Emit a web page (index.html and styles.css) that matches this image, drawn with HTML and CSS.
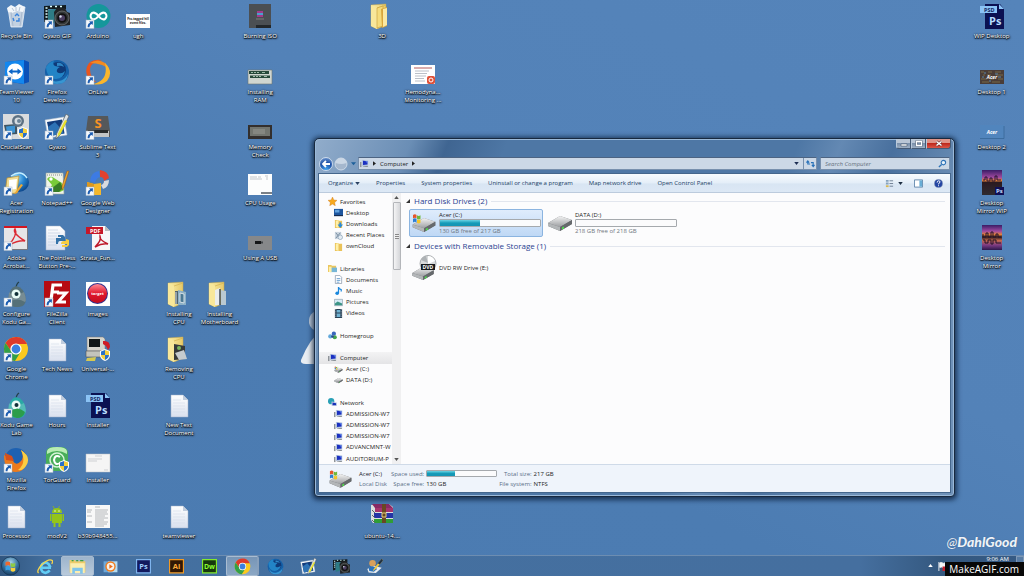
FILE: index.html
```html
<!DOCTYPE html>
<html lang="en">
<head>
<meta charset="utf-8">
<title>Desktop</title>
<link rel="stylesheet" href="styles.css">
</head>
<body>
<svg class="sprite" aria-hidden="true">
  <defs>
    <linearGradient id="g-page" x1="0" y1="0" x2="0" y2="1"><stop offset="0" stop-color="#fff"/><stop offset="1" stop-color="#d9e0ee"/></linearGradient>
    <linearGradient id="g-fold" x1="0" y1="0" x2="1" y2="0"><stop offset="0" stop-color="#fbefa9"/><stop offset="1" stop-color="#e6c867"/></linearGradient>
    <linearGradient id="g-sunset" x1="0" y1="0" x2="0" y2="1"><stop offset="0" stop-color="#3a1c66"/><stop offset=".3" stop-color="#a04aa0"/><stop offset=".42" stop-color="#e0803c"/><stop offset=".5" stop-color="#2b1a20"/><stop offset="1" stop-color="#2f2b30"/></linearGradient>
    <linearGradient id="g-mirror" x1="0" y1="0" x2="0" y2="1"><stop offset="0" stop-color="#3a1c66"/><stop offset=".25" stop-color="#a04aa0"/><stop offset=".38" stop-color="#e0803c"/><stop offset=".48" stop-color="#2b1a20"/><stop offset=".62" stop-color="#c4684a"/><stop offset=".8" stop-color="#7e3c84"/><stop offset="1" stop-color="#2c184c"/></linearGradient>
    <linearGradient id="g-disk" x1="0" y1="0" x2="0" y2="1"><stop offset="0" stop-color="#f4f4f4"/><stop offset="1" stop-color="#9c9ea1"/></linearGradient>
    <radialGradient id="g-globe" cx=".35" cy=".3" r=".8"><stop offset="0" stop-color="#9fe0ff"/><stop offset=".5" stop-color="#2684cf"/><stop offset="1" stop-color="#083a7d"/></radialGradient>
    <radialGradient id="g-orb" cx=".5" cy=".3" r=".75"><stop offset="0" stop-color="#a9d3ea"/><stop offset=".55" stop-color="#35719f"/><stop offset="1" stop-color="#143658"/></radialGradient>
    <radialGradient id="g-nav" cx=".5" cy=".9" r=".9"><stop offset="0" stop-color="#3fa2ee"/><stop offset=".55" stop-color="#1c4fa6"/><stop offset="1" stop-color="#6d95cc"/></radialGradient>
    <linearGradient id="g-red" x1="0" y1="0" x2="0" y2="1"><stop offset="0" stop-color="#ff8c96"/><stop offset=".5" stop-color="#e1162b"/><stop offset="1" stop-color="#c10d20"/></linearGradient>
  </defs>

  <symbol id="arrow" viewBox="0 0 26 26"><rect x="1" y="17" width="8" height="8.5" fill="#f6f9fc" stroke="#a3b3c4" stroke-width=".5"/><path d="M2.6 24.3c0-3 .9-4.4 2.6-4.6l-1.1-1.2 3.9-.3-.3 3.9-1.1-1.1c-1.3.3-1.9 1.4-2.1 3.3z" fill="#1c5cb0"/></symbol>
  <symbol id="page" viewBox="0 0 26 26"><path d="M5 3h12l5 5v17H5z" fill="url(#g-page)" stroke="#a3b3c8" stroke-width=".5"/><path d="M17 3v5h5z" fill="#c1cddd"/><path d="M7 8h8M7 11h12M7 14h12M7 17h12M7 20h12" stroke="#d3dcea" stroke-width=".6"/></symbol>
  <symbol id="folder" viewBox="0 0 26 26"><path d="M2 2l15-1v21l-9 4-6-3z" fill="url(#g-fold)" stroke="#c6a648" stroke-width=".5"/><path d="M2 2l6 3v21l-6-3z" fill="#f8e79a"/><path d="M8 5l9-3" fill="none" stroke="#d4b350" stroke-width=".7"/></symbol>
  <symbol id="shield" viewBox="0 0 10 12"><path d="M5 0l5 2v4q0 4-5 6Q0 10 0 6V2z" fill="#fff"/><path d="M5 1v5H1V2.500z" fill="#2a70c8"/><path d="M5 1v5h4V2.500z" fill="#f5cf3c"/><path d="M1 6h4v5Q1 9 1 6z" fill="#f5cf3c"/><path d="M9 6H5v5q4-2 4-5z" fill="#2a70c8"/></symbol>
  <symbol id="chrome" viewBox="0 0 26 26"><circle cx="13" cy="13" r="12" fill="#fbc91f"/><path d="M2.600 7A12 12 0 0 1 24 8H13a5.400 5.400 0 0 0-5 7z" fill="#de3a2c"/><path d="M2.600 7A12 12 0 0 0 12 25l5.500-9a5.400 5.400 0 0 1-9.500-1z" fill="#33a047"/><circle cx="13" cy="13" r="5.600" fill="#fff"/><circle cx="13" cy="13" r="4.400" fill="#3c7fe0"/></symbol>
  <symbol id="foxdev" viewBox="0 0 26 26"><circle cx="13" cy="13" r="12" fill="#1560a8"/><circle cx="14" cy="11" r="8" fill="#0f3a78"/><path d="M2 8q4-6 8-6-2 3 1 5l5 1q-4 2-3 5 4 3 8-1-1 7-9 8-9 0-10-12z" fill="#2384c6"/><path d="M3 16q4 8 12 6 6-1 9-7-1 10-11 10-8 0-10-9z" fill="#3796d2"/><path d="M13 4q5-1 7 4-3-2-7-1z" fill="#2f86c4"/></symbol>
  <symbol id="camera" viewBox="0 0 26 26"><path d="M0 3l22-1v4H4v12l-4 1z" fill="#111b1f"/><path d="M1.500 5h2M1.500 8h2M1.500 11h2M1.500 14h2M6 3.500h2M11 3.500h2M16 3.500h2" stroke="#dff" stroke-width="1.400"/><path d="M4 7l8-1 2 5-4 9-6 1z" fill="#2e7c85"/><path d="M10 9l3-4h8l2 4 3 1v12l-15 2z" fill="#202325"/><circle cx="18" cy="15" r="7" fill="#343839" stroke="#888" stroke-width=".6"/><circle cx="18" cy="15" r="4.800" fill="#111"/><circle cx="18" cy="15" r="3" fill="#4c3f62"/><circle cx="16.500" cy="13.500" r="1.200" fill="#d8dceb"/></symbol>
  <symbol id="gyazo" viewBox="0 0 26 26"><path d="M1 6l19-3 3 18-19 3z" fill="#f7f9fb" stroke="#b5c0cc" stroke-width=".5"/><path d="M3 8l15-2.500 2.500 14L6 22z" fill="#123c7c"/><path d="M4 13l7-5 8 9 .5 2.500L6 22z" fill="#2d72b5"/><path d="M22 0l3 2-9 19-4 4 .500-5z" fill="#dfe4e5" stroke="#555e65" stroke-width=".7"/><path d="M21 6l2 1-6.500 13-3 3 .5-3.500z" fill="#e8e22d"/></symbol>
  <symbol id="disk" viewBox="0 0 26 18"><path d="M1 9L13 2l12 4v4L13 17 1 12z" fill="#717579"/><path d="M1 9l12-7 12 4-12 7z" fill="url(#g-disk)"/><path d="M1 9l12 4v4L1 12z" fill="#b3b6b8"/><path d="M13 13l12-7v4l-12 7z" fill="#66696c"/><path d="M15 13.500l2-1v2l-2 1z" fill="#4be148"/></symbol>
  <symbol id="osdisk" viewBox="0 0 26 20"><use href="#disk" x="0" y="3" width="26" height="17"/><path d="M2 2q2-1.500 3.500 0v3.500Q4 4 2 5.500z" fill="#e5562b"/><path d="M6 2.300q1.600 1.500 3.500 0v3.500Q7.600 7.300 6 5.800z" fill="#70b83a"/><path d="M2 6q2-1.500 3.500 0v3.500Q4 8 2 9.500z" fill="#2c7fd2"/><path d="M6 6.300q1.600 1.500 3.500 0v3.500Q7.600 11.300 6 9.800z" fill="#f4c529"/></symbol>
  <symbol id="pc" viewBox="0 0 12 10"><path d="M0 3h2v7H0z" fill="#8f9499"/><path d="M2.500 0l8.500 1v6.500l-8.500 1z" fill="#b3c3de"/><path d="M4 1.300l6 .7v4.200l-6 .8z" fill="#1b2fc0"/><path d="M7 2l3 .3V4.500z" fill="#6e96f2"/><path d="M4 9l6-1 1 1.500H4z" fill="#8b9298"/></symbol>
  <symbol id="minifolder" viewBox="0 0 10 10"><path d="M1 1h4v1h4v8H1z" fill="#eac258"/><path d="M2 2l3-1v9L2 9z" fill="#fff0a9"/></symbol>
  <symbol id="kodu" viewBox="0 0 26 26"><path d="M13 8Q13 3 16 1" fill="none" stroke="#244149" stroke-width="1.300"/><path d="M13 5q9 2 10 13 0 7-7 8-11 1-11-8Q6 7 13 5z" fill="currentColor"/><path d="M6 11q4 6 15 0 3 8 1 10-7-5-17 0z" fill="#fff" opacity=".2"/><circle cx="13" cy="13" r="4.500" fill="#e9fbf7"/><circle cx="13.500" cy="13" r="2" fill="#112f38"/></symbol>
</svg>

<main class="desktop">
  <svg class="wallmark" viewBox="0 0 70 60" aria-hidden="true"><path d="M20 2Q8 4 9 15q1 7 11 9z" fill="#bcc9d8"/><path d="M22 22Q10 30 1 52q-1 4 5 4h40z" fill="#e8edf2"/></svg>

  <button class="item c1 r1"><svg viewBox="0 0 26 26"><path d="M5 5l17-1-3 20H8z" fill="#c3d1e1" stroke="#edf3f9" stroke-width=".8"/><path d="M4 5l4-3 4 2 4-3 6 3-2 5-6-1-5 2-4-1z" fill="#f2f6fa"/><path d="M8 9l2 14M19 9l-2 14M13 4v4M9 5l2 3M17 4l-1 4" stroke="#a5b5ca" stroke-width=".8"/><path d="M12 13l2-2 2 2M16 15l0 3h-3M11 18l-1-3" fill="none" stroke="#3b84dc" stroke-width="1.400"/></svg><span>Recycle Bin</span></button>
  <button class="item c2 r1"><svg viewBox="0 0 26 26"><use href="#camera"/><use href="#arrow"/></svg><span>Gyazo GIF</span></button>
  <button class="item c3 r1"><svg viewBox="0 0 26 26"><circle cx="13.500" cy="13" r="12" fill="#15979b"/><path d="M13.500 13q-3.500-4.500-6.500-3-3 3 0 6 3 1.500 6.500-3 3.500-4.500 6.500-3 3 3 0 6-3 1.500-6.500-3z" fill="none" stroke="#fff" stroke-width="2"/><use href="#arrow"/></svg><span>Arduino</span></button>
  <button class="item c4 r1"><svg viewBox="0 0 26 26"><path d="M1 11h24v14H1z" fill="#fff"/><text x="13" y="17" font-size="3" font-weight="700" fill="#222" text-anchor="middle">Pro-tagged hill</text><text x="13" y="21" font-size="3" font-weight="700" fill="#222" text-anchor="middle">event files.</text></svg><span>ugh</span></button>
  <button class="item c7 r1"><svg viewBox="0 0 26 26"><path d="M2 1h22v24H2z" fill="#4b4f53"/><path d="M10 8h6v6h-6z" fill="#a33b8c"/><path d="M10 10h6v2h-6z" fill="#4aa0cf"/><path d="M9 16h8" stroke="#8c8c8c" stroke-width=".8"/><path d="M9 22h15v3H9z" fill="#23272a"/></svg><span>Burning ISO</span></button>
  <button class="item c10 r1"><svg viewBox="0 0 26 26"><use href="#folder"/><path d="M8 5l6-2v20l-6 2z" fill="#f5dc7c" stroke="#c49b35" stroke-width=".6"/><path d="M12 6l6-2v19l-5 2z" fill="#d9a63c"/><path d="M14 6l4-1v17l-4 2z" fill="#fbe9a2"/></svg><span>3D</span></button>
  <button class="item c25 r1"><svg viewBox="0 0 26 26"><path d="M6 1h15l4 5v20H6z" fill="#0b1152"/><path d="M20 1v5h5z" fill="#8cc5f8"/><path d="M1 3h17v7H1z" fill="#8bc3f5"/><text x="5" y="8.500" font-size="5.500" font-weight="700" fill="#12255f">PSD</text><text x="10" y="22" font-size="11" font-weight="700" fill="#b7dcff">Ps</text></svg><span>WIP Desktop</span></button>

  <button class="item c1 r2"><svg viewBox="0 0 26 26"><path d="M3 3l18-2 5 2v20l-6 2-17-3z" fill="#0b51b8"/><path d="M2 3l19-2v24L2 22z" fill="#1387ee"/><circle cx="12" cy="12.500" r="8" fill="#fff"/><path d="M5.500 12.500l4-3v2h5v-2l4 3-4 3v-2h-5v2z" fill="#0b66c8"/><use href="#arrow"/></svg><span>TeamViewer<br>10</span></button>
  <button class="item c2 r2"><svg viewBox="0 0 26 26"><use href="#foxdev"/><use href="#arrow"/></svg><span>Firefox<br>Develop...</span></button>
  <button class="item c3 r2"><svg viewBox="0 0 26 26"><path d="M5 22Q-2 12 4 4q5-4 13-3-12 3-12 9 0 8 6 13z" fill="#e8561f"/><path d="M5 4q8-5 15 0 5 5 5 11-2-7-8-9-6-2-12-2z" fill="#f28a22"/><path d="M20 4q9 9 2 18-6 5-14 3 16-3 12-21z" fill="#fbb62b"/><use href="#arrow"/></svg><span>OnLive</span></button>
  <button class="item c7 r2"><svg viewBox="0 0 26 26"><path d="M1 11h24v14H1z" fill="#d0d6d0" stroke="#6b7772" stroke-width=".6"/><path d="M2 12h20v3H2zM3 16.500h20V19H3z" fill="#27493a"/><path d="M4 13.500h2m1 0h2m1 0h2m3 0h3M6 17.500h2m1 0h2m1 0h2m3 0h3" stroke="#9dbaa6"/></svg><span>Installing<br>RAM</span></button>
  <button class="item c11 r2"><svg viewBox="0 0 26 26"><path d="M1 6h24v19H1z" fill="#fff"/><path d="M4 9h18" stroke="#b75a5a"/><path d="M5 12h14M5 14.500h12M5 17h11M5 19.500h9M5 22h10" stroke="#a9b0ba" stroke-width=".8"/><rect x="17" y="17" width="8" height="8" rx="2" fill="#e05038"/><circle cx="21" cy="21" r="2" fill="none" stroke="#fff"/></svg><span>Hemodyna...<br>Monitoring ...</span></button>
  <button class="item c25 r2"><svg viewBox="0 0 26 26"><path d="M1 11h24v14H1z" fill="#4a3d38"/><path d="M2 13h3m4 0h4m3 0h6M4 16h2m2 0h4m5 0h7M2 20h6m3 0h4m4 0h5M3 23h7m3 0h8" stroke="#776a48"/><path d="M5 14h2m9 1h3M3 18h2m14 0h3m-12 4h2" stroke="#5d86a8"/><text x="13" y="20" font-size="5" font-style="italic" font-weight="700" fill="#fff" text-anchor="middle">Acer</text></svg><span>Desktop 1</span></button>

  <button class="item c1 r3"><svg viewBox="0 0 26 26"><path d="M0 0h26v25H0z" fill="#dadcde"/><path d="M1 11l13-1v10L3 21z" fill="#3f5563"/><path d="M3 12.500l9-1v7l-8 1z" fill="#3d93d3"/><circle cx="15" cy="7" r="6" fill="#5d7183"/><circle cx="15" cy="7" r="3.500" fill="#d5dce1"/><circle cx="16" cy="7" r="2" fill="#6c8497"/><use href="#shield" x="15" y="13" width="10" height="12"/><use href="#arrow"/></svg><span>CrucialScan</span></button>
  <button class="item c2 r3"><svg viewBox="0 0 26 26"><use href="#gyazo"/><use href="#arrow"/></svg><span>Gyazo</span></button>
  <button class="item c3 r3"><svg viewBox="0 0 26 26"><path d="M3 2h20l2 15v6H1v-6z" fill="#55585a"/><path d="M2 17h22v6H2z" fill="#c3c5c5"/><path d="M3 16h20v3H3z" fill="#292b2b"/><text x="13" y="14" font-size="13" font-weight="700" fill="#f79325" text-anchor="middle">S</text><use href="#arrow"/></svg><span>Sublime Text<br>3</span></button>
  <button class="item c7 r3"><svg viewBox="0 0 26 26"><path d="M1 11h24v14H1z" fill="#332f2d"/><path d="M3 13h20v9H3z" fill="#72756f"/><path d="M6 15h12v5H6z" fill="#858781"/></svg><span>Memory<br>Check</span></button>
  <button class="item c25 r3"><svg viewBox="0 0 26 26"><path d="M1 11h24v14H1z" fill="#5185bd"/><path d="M1 24.500h24V12" fill="none" stroke="#376797" stroke-width=".8"/><text x="13" y="20" font-size="5" font-style="italic" font-weight="700" fill="#fff" text-anchor="middle">Acer</text></svg><span>Desktop 2</span></button>

  <button class="item c1 r4"><svg viewBox="0 0 26 26"><circle cx="16" cy="12" r="10" fill="url(#g-globe)"/><path d="M8 6q10-7 16 2" fill="none" stroke="#c6edff" stroke-width="1.500"/><path d="M4 8l12-2-2 17-12 1z" fill="#f2dc91" stroke="#b78c31" stroke-width=".7"/><path d="M6 10l8-1-1 10-7 1z" fill="#fff"/><path d="M18 14l2 1-6 8-3 1z" fill="#eea832"/><use href="#arrow"/></svg><span>Acer<br>Registration</span></button>
  <button class="item c2 r4"><svg viewBox="0 0 26 26"><path d="M2 3h17l1 21H2z" fill="#eff3ea" stroke="#a0a89c" stroke-width=".6"/><path d="M3 5h15" stroke="#888" stroke-dasharray="1 1"/><path d="M3 9q3-4 7-1l8 5 2 7-4 2-12-1 4-6z" fill="#79ca39"/><circle cx="7" cy="9" r="1.700" fill="#fff"/><path d="M8 18l8-6 3 6-4 4H8z" fill="#387c26"/><path d="M25 1l-5 16-2 3V16l5-15z" fill="#eaa62c" stroke="#8c4e1c" stroke-width=".5"/><use href="#arrow"/></svg><span>Notepad++</span></button>
  <button class="item c3 r4"><svg viewBox="0 0 26 26"><path d="M5 11Q6 2 14 1l1 6q-4 1-5 6z" fill="#3d7be3"/><path d="M15 0q8 1 9 8l-5 3q0-4-4-4z" fill="#e3412f"/><path d="M19 11l5-1q0 7-6 9l-2-4q3-1 3-4z" fill="#d9dbe0"/><path d="M2 12l7 2 7-1v12H9L2 19z" fill="#f5b82c"/><path d="M2 12l7 2v11l-7-6z" fill="#dc9820"/><use href="#arrow"/></svg><span>Google Web<br>Designer</span></button>
  <button class="item c7 r4"><svg viewBox="0 0 26 26"><path d="M1 4h24v21H1z" fill="#fcfdfd"/><path d="M3 7h7m1 0h3m4-1h3M3 9h12M20 7v3" stroke="#c3c7cb"/><path d="M14 22h11v2H14z" fill="#7a8086"/></svg><span>CPU Usage</span></button>
  <button class="item c25 r4"><svg viewBox="0 0 26 26"><path d="M3 0h20v25H3z" fill="url(#g-sunset)"/><path d="M4 10h2V7h2v4h3V8h2v3h3V6h2v4h4" stroke="#2a1530" fill="none"/><path d="M16 17h9v8h-9z" fill="#101056"/><text x="17" y="23" font-size="6" font-weight="700" fill="#c3ddff">Ps</text></svg><span>Desktop<br>Mirror WIP</span></button>

  <button class="item c1 r5"><svg viewBox="0 0 26 26"><path d="M1 2h23v22H1z" fill="#e5e5e7"/><path d="M1 1h23v2H1z" fill="#d41620"/><path d="M6 20Q15 9 12 4q-3 4 10 12-6-1-16 4z" fill="none" stroke="#dc2932" stroke-width="1.500"/><path d="M24.500 3v21.500H5" fill="none" stroke="#77777c"/><use href="#arrow"/></svg><span>Adobe<br>Acrobat...</span></button>
  <button class="item c2 r5"><svg viewBox="0 0 26 26"><path d="M2 1h14l5 5v19H2z" fill="url(#g-page)" stroke="#a3b3c8" stroke-width=".5"/><path d="M4 5h10M4 8h12M4 11h9M4 14h9M4 17h9M4 20h9" stroke="#bccadd" stroke-width=".6"/><path d="M14 10h5l2 2v4h-5q-2 0-2 3h-2v-6h5v-1h-3z" fill="#3472a8"/><path d="M25 15v5l-2 2h-5v-2h5v-1h-6q0-3 3-3h2v-2z" fill="#f6cd3e"/></svg><span>The Pointless<br>Button Pre-...</span></button>
  <button class="item c3 r5"><svg viewBox="0 0 26 26"><path d="M7 1h13l5 5v19H7z" fill="#f7f7f8"/><path d="M20 1v5h5z" fill="#bbb"/><path d="M1 2h17v7H1z" fill="#c51728"/><text x="5" y="7.500" font-size="5.500" font-weight="700" fill="#fff">PDF</text><path d="M10 22q7-7 5-11-1 4 8 8-6-1-13 3z" fill="none" stroke="#be1a2b" stroke-width="1.500"/></svg><span>Strata_Fun...</span></button>
  <button class="item c7 r5"><svg viewBox="0 0 26 26"><path d="M1 11h24v14H1z" fill="#86888a"/><path d="M8 16h6v3H8z" fill="#151719"/><path d="M14 16.500h2v2h-2z" fill="#404448"/></svg><span>Using A USB</span></button>
  <button class="item c25 r5"><svg viewBox="0 0 26 26"><path d="M3 0h20v25H3z" fill="url(#g-mirror)"/><path d="M4 9v3h3V8h2v4h3V7h2v5h3V9h2v3h3M4 15h2v3h3v-3h3v4h2v-4h3v3h5" stroke="#25122b" fill="none"/></svg><span>Desktop<br>Mirror</span></button>

  <button class="item c1 r6"><svg class="kodu-grey" viewBox="0 0 26 26"><use href="#kodu"/><use href="#arrow"/></svg><span>Configure<br>Kodu Ga...</span></button>
  <button class="item c2 r6"><svg viewBox="0 0 26 26"><path d="M0 0h26v26H0z" fill="#b60b12"/><path d="M7 19L9 4h9M8 11h7" fill="none" stroke="#fff" stroke-width="3.200"/><path d="M13 12h9l-8 9h8" fill="none" stroke="#fff" stroke-width="3"/><use href="#arrow"/></svg><span>FileZilla<br>Client</span></button>
  <button class="item c3 r6"><svg viewBox="0 0 26 26"><path d="M1 1h24v24H1z" fill="#fff"/><circle cx="12.500" cy="12.500" r="10.500" fill="#31308c"/><circle cx="12.500" cy="12.500" r="9.500" fill="url(#g-red)"/><text x="12.500" y="14" font-size="4" font-weight="700" fill="#fff" text-anchor="middle">target</text></svg><span>images</span></button>
  <button class="item c5 r6"><svg viewBox="0 0 26 26"><use href="#folder"/><path d="M9 10h7v13H9z" fill="#52626b"/><path d="M12 9l8 2v13h-8z" fill="#8db0c6"/><path d="M10 11v12M14 12l4 1v9l-4-1z" fill="#4b7994" stroke="#d8e1e7"/></svg><span>Installing<br>CPU</span></button>
  <button class="item c6 r6"><svg viewBox="0 0 26 26"><use href="#folder"/><path d="M8 9l5-2v17H8z" fill="#e9eced"/><path d="M13 8v16" stroke="#3f4a55" stroke-width="1.500"/><path d="M14 9l5 1v14h-5z" fill="#bac9d1"/></svg><span>Installing<br>Motherboard</span></button>

  <button class="item c1 r7"><svg viewBox="0 0 26 26"><use href="#chrome"/><use href="#arrow"/></svg><span>Google<br>Chrome</span></button>
  <button class="item c2 r7"><svg viewBox="0 0 26 26"><use href="#page"/></svg><span>Tech News</span></button>
  <button class="item c3 r7"><svg viewBox="0 0 26 26"><path d="M2 1h16l2 2v12H2z" fill="#d6d5cd" stroke="#777" stroke-width=".5"/><path d="M4 3h11v8H4z" fill="#111718"/><path d="M1 15h20v6H1z" fill="#c4c4bc" stroke="#555" stroke-width=".6"/><path d="M18 5q7-1 7 6l-2 3-2-4-3-2z" fill="#cf1c27"/><path d="M2 22l9-1-1 4H1z" fill="#d6c951"/><use href="#shield" x="15" y="13" width="10" height="12"/></svg><span>Universal-...</span></button>
  <button class="item c5 r7"><svg viewBox="0 0 26 26"><use href="#folder"/><path d="M8 8l11 2v13l-11 1z" fill="#36393a"/><circle cx="13" cy="12" r="2" fill="#79b55c"/><path d="M9 17l9-3 3 9-8 1z" fill="#c6cbce"/></svg><span>Removing<br>CPU</span></button>

  <button class="item c1 r8"><svg class="kodu-teal" viewBox="0 0 26 26"><use href="#kodu"/><path d="M7 20q7-7 15 0-2 6-8 6-6-1-7-6z" fill="#2b9d4a"/><use href="#arrow"/></svg><span>Kodu Game<br>Lab</span></button>
  <button class="item c2 r8"><svg viewBox="0 0 26 26"><use href="#page"/></svg><span>Hours</span></button>
  <button class="item c3 r8"><svg viewBox="0 0 26 26"><path d="M6 1h15l4 5v20H6z" fill="#0b1152"/><path d="M20 1v5h5z" fill="#8cc5f8"/><path d="M1 3h17v7H1z" fill="#8bc3f5"/><text x="5" y="8.500" font-size="5.500" font-weight="700" fill="#12255f">PSD</text><text x="10" y="22" font-size="11" font-weight="700" fill="#b7dcff">Ps</text></svg><span>Installer</span></button>
  <button class="item c5 r8"><svg viewBox="0 0 26 26"><use href="#page"/></svg><span>New Text<br>Document</span></button>

  <button class="item c1 r9"><svg viewBox="0 0 26 26"><circle cx="13" cy="12" r="11" fill="#1e61b1"/><path d="M1 8q4 2 3 5 3-3 6 1 3 5 7 1 5-4 1-12 7 5 6 12-3 10-11 10Q1 25 1 8z" fill="#ed7b1d"/><path d="M18 3q11 7 5 16-3 5-8 4 9-7 3-20z" fill="#fbce43"/><path d="M2 6l7 3 2 5-8-1z" fill="#d44f1c"/><use href="#arrow"/></svg><span>Mozilla<br>Firefox</span></button>
  <button class="item c2 r9"><svg viewBox="0 0 26 26"><rect x="2" y="0" width="22" height="24" rx="6" fill="#48ae58"/><path d="M3 7q10-6 20 0V4q-1-4-10-4T3 4z" fill="#b9edb4"/><circle cx="13" cy="13" r="7" fill="none" stroke="#d9f5d9" stroke-width="1.500"/><path d="M16 10q-5-3-6 3 1 6 6 3" fill="none" stroke="#fff" stroke-width="2"/><use href="#shield" x="15" y="13" width="10" height="12"/><use href="#arrow"/></svg><span>TorGuard</span></button>
  <button class="item c3 r9"><svg viewBox="0 0 26 26"><path d="M1 7h24v18H1z" fill="#f5f5f5" stroke="#b9bdc2" stroke-width=".5"/><path d="M10 9h7M3 12h14M3 14h9M19 23h4" stroke="#bfc2c5" stroke-width=".7"/></svg><span>Installer</span></button>

  <button class="item c1 r10"><svg viewBox="0 0 26 26"><use href="#page"/></svg><span>Processor</span></button>
  <button class="item c2 r10"><svg viewBox="0 0 26 26"><path d="M9 3l1.500 3m5-3L14 6" stroke="#8fbb12" stroke-width=".8"/><path d="M8 10q0-5 5-5t5 5zM8 11h10v9H8zM6 11h1.500v7H6zM18.500 11H20v7h-1.500zM9.500 20h2v4h-2zM14.500 20h2v4h-2z" fill="#94c51a"/><circle cx="11" cy="8" r=".7" fill="#fff"/><circle cx="15" cy="8" r=".7" fill="#fff"/></svg><span>modV2</span></button>
  <button class="item c3 r10"><svg viewBox="0 0 26 26"><path d="M1 2h24v23H1z" fill="#f8f8f8"/><path d="M10 4h5M2 7h5m3 0h13M2 9h4m4 0h12M10 11h13M2 13h5m3 0h10M10 15h13M10 17h9M2 19h5m3 0h13M10 21h12M10 23h9" stroke="#a3a7ab" stroke-width=".8"/></svg><span>b39b948455...</span></button>
  <button class="item c5 r10"><svg viewBox="0 0 26 26"><use href="#page"/></svg><span>teamviewer</span></button>
  <button class="item c10 r10"><svg viewBox="0 0 26 26"><path d="M2 2l18-1 4 3v15l-5 1H4l-2-3z" fill="#dcdfdf"/><path d="M3 1h17l4 4H6z" fill="#892a65"/><path d="M6 5h18v4H6z" fill="#a6346e"/><path d="M5 10h19v5H5z" fill="#2534a6"/><path d="M5 16h19v4H5z" fill="#2f9d36"/><path d="M3 7l3 3m-3 2l3 3m-3 2l3 3" stroke="#60656b"/><path d="M13 1h4v19h-4z" fill="#694822"/><path d="M13 10h4v4h-4z" fill="none" stroke="#e5d07d"/></svg><span>ubuntu-14....</span></button>

  <p class="signature"><span>@</span>DahlGood</p>

  <section class="window" aria-label="Computer">
    <header class="titlebar">
      <div class="caption">
        <button aria-label="Minimize"><svg viewBox="0 0 12 10"><path d="M3 5h6v2H3z" fill="#fff" stroke="#4b5b70" stroke-width=".6"/></svg></button>
        <button aria-label="Maximize"><svg viewBox="0 0 12 10"><path d="M3.500 2.500h5v4h-5z" fill="none" stroke="#4b5b70" stroke-width="2.200"/><path d="M3.500 2.500h5v4h-5z" fill="none" stroke="#fff" stroke-width="1.300"/></svg></button>
        <button class="close" aria-label="Close"><svg viewBox="0 0 12 10"><path d="M3.500 2.500l5 4m0-4l-5 4" stroke="#6a2b2b" stroke-width="2.600"/><path d="M3.500 2.500l5 4m0-4l-5 4" stroke="#fff" stroke-width="1.500"/></svg></button>
      </div>
    </header>
    <nav class="addressbar">
      <button class="round back" aria-label="Back"><svg viewBox="0 0 14 14"><circle cx="7" cy="7" r="6.500" fill="url(#g-nav)" stroke="#e2ebf5" stroke-width=".8"/><path d="M11 7H4m3-3L4 7l3 3" fill="none" stroke="#fff" stroke-width="1.800"/></svg></button>
      <button class="round" aria-label="Forward"><svg viewBox="0 0 14 14"><circle cx="7" cy="7" r="6" fill="#a5b7cd" stroke="#d8e2ee" stroke-width=".8"/><path d="M1.500 6a5.500 5 0 0 1 11 0q-5 2-11 0z" fill="#cbd7e5"/></svg></button>
      <button class="history" aria-label="Recent pages"><svg viewBox="0 0 6 4"><path d="M0 0h6L3 3.500z" fill="#1d5f9a"/></svg></button>
      <div class="address">
        <svg class="s9" viewBox="0 0 12 10"><use href="#pc"/></svg>
        <svg class="tri" viewBox="0 0 4 6"><path d="M0 0l4 3-4 3z" fill="#222"/></svg>
        <button class="crumb">Computer</button>
        <svg class="tri" viewBox="0 0 4 6"><path d="M0 0l4 3-4 3z" fill="#222"/></svg>
        <svg class="drop" viewBox="0 0 6 4"><path d="M0 0h6L3 4z" fill="#1c2d52"/></svg>
        <button class="refresh" aria-label="Refresh"><svg viewBox="0 0 10 10"><path d="M4.500 5.500H2V2M.5 4L2 2l1.500 2M5.500 4H8v4M6.500 6.500L8 8.500l1.500-2" fill="none" stroke="#2670b8" stroke-width="1.200"/></svg></button>
      </div>
      <label class="search"><input type="search" placeholder="Search Computer" aria-label="Search Computer"><svg class="s9" viewBox="0 0 10 10"><circle cx="6" cy="4" r="2.500" fill="#e8f3fb" stroke="#2f73b7" stroke-width="1.200"/><path d="M4 6L1 9" stroke="#2f73b7" stroke-width="1.500"/></svg></label>
    </nav>
    <div class="body">
      <div class="toolbar">
        <button>Organize <svg class="caret" viewBox="0 0 6 4"><path d="M0 0h6L3 4z" fill="#2b4263"/></svg></button>
        <button>Properties</button>
        <button>System properties</button>
        <button>Uninstall or change a program</button>
        <button>Map network drive</button>
        <button>Open Control Panel</button>
        <div class="tools">
          <button aria-label="Change view"><svg class="s9" viewBox="0 0 10 10"><path d="M1 1h3v2H1zM1 4h3v2H1z" fill="#86a2bd"/><path d="M1 7h3v2H1z" fill="#d8b84f"/><path d="M5 2h4M5 5h4M5 8h4" stroke="#6b7c91"/></svg><svg class="caret" viewBox="0 0 6 4"><path d="M0 0h6L3 4z" fill="#1c2d42"/></svg></button>
          <button aria-label="Preview pane"><svg class="s9" viewBox="0 0 10 10"><path d="M.5 1h9v8h-9z" fill="#fff" stroke="#5b82a9"/><path d="M6 1.500h3v7H6z" fill="#68add6"/></svg></button>
          <button aria-label="Help"><svg class="s9" viewBox="0 0 10 10"><circle cx="5" cy="5" r="4.500" fill="#2345a3" stroke="#8a98b6" stroke-width=".6"/><path d="M3.500 4q0-2 1.700-2t1.500 1.700Q5 4.500 5 6M5 7v1" fill="none" stroke="#fff" stroke-width="1.100"/></svg></button>
        </div>
      </div>
      <div class="panes">
        <ul class="tree">
          <li><svg viewBox="0 0 10 10"><path d="M5 0l1.500 3.300 3.500.4-2.600 2.400.7 3.600L5 7.900 1.900 9.700l.7-3.600L0 3.700l3.500-.4z" fill="#f7a91f" stroke="#c9741a" stroke-width=".4"/></svg>Favorites</li>
          <li class="sub"><svg viewBox="0 0 10 10"><path d="M0 1h10v8H0z" fill="#1d559e"/><path d="M1 2h5v3H1z" fill="#63a2de"/><path d="M0 8h10v1H0z" fill="#16223c"/></svg>Desktop</li>
          <li class="sub"><svg viewBox="0 0 10 10"><use href="#minifolder"/><path d="M6 4h2v2h2L7 10 4 6h2z" fill="#288ada"/></svg>Downloads</li>
          <li class="sub"><svg viewBox="0 0 10 10"><path d="M1 1h7v8H1z" fill="#cbd5df"/><path d="M2 2l5 6M7 2L2 8" stroke="#71879c"/><circle cx="7" cy="7" r="2.500" fill="#e4ecf3" stroke="#748fa7" stroke-width=".6"/></svg>Recent Places</li>
          <li class="sub"><svg viewBox="0 0 10 10"><use href="#minifolder"/></svg>ownCloud</li>
          <li class="blank" aria-hidden="true"></li>
          <li><svg viewBox="0 0 10 10"><path d="M0 1h4v1h5v7H0z" fill="#eac55e"/><path d="M2 4h8v5H2z" fill="#77b6d6"/><path d="M1 3h3v6H1z" fill="#fff0a9"/></svg>Libraries</li>
          <li class="sub"><svg viewBox="0 0 10 10"><path d="M1.500.500h5l2 2v7h-7z" fill="#fff" stroke="#8797aa" stroke-width=".8"/><path d="M3 4h4M3 6h4M3 8h3" stroke="#3e81c0" stroke-width=".8"/></svg>Documents</li>
          <li class="sub"><svg viewBox="0 0 10 10"><path d="M5 8V1q0 2 3 3v2" fill="none" stroke="#1987dd" stroke-width="1.400"/><circle cx="3.500" cy="8" r="2" fill="#1987dd"/></svg>Music</li>
          <li class="sub"><svg viewBox="0 0 10 10"><path d="M.5 1.500h9v7h-9z" fill="#d6ebf6" stroke="#8999a7" stroke-width=".7"/><path d="M1 6l3-2 5 2v2H1z" fill="#3c9586"/></svg>Pictures</li>
          <li class="sub"><svg viewBox="0 0 10 10"><path d="M1 0h8v10H1z" fill="#263f55"/><path d="M3 1h4v3H3zM3 5h4v4H3z" fill="#70b2d2"/><path d="M2 0v10M8 0v10" stroke="#ddd" stroke-width=".7" stroke-dasharray="1 1"/></svg>Videos</li>
          <li class="blank" aria-hidden="true"></li>
          <li><svg viewBox="0 0 10 10"><circle cx="2.500" cy="6" r="2.300" fill="#62a9dc"/><circle cx="6.500" cy="3" r="2.400" fill="#3865bd"/><circle cx="7.500" cy="7" r="2.300" fill="#44a34d"/><circle cx="5" cy="6" r="1.400" fill="#27478d"/></svg>Homegroup</li>
          <li class="blank" aria-hidden="true"></li>
          <li class="current"><svg viewBox="0 0 12 10"><use href="#pc"/></svg>Computer</li>
          <li class="sub"><svg viewBox="0 0 26 20"><use href="#osdisk"/></svg>Acer (C:)</li>
          <li class="sub"><svg viewBox="0 0 26 18"><use href="#disk"/></svg>DATA (D:)</li>
          <li class="blank" aria-hidden="true"></li>
          <li><svg viewBox="0 0 10 10"><circle cx="3.500" cy="3.500" r="3.500" fill="#29a0b6"/><path d="M4 4l6 1v4H4z" fill="#cbd4e6"/><path d="M5 5l4 .7V8H5z" fill="#1731b8"/></svg>Network</li>
          <li class="sub"><svg viewBox="0 0 12 10"><use href="#pc"/></svg>ADMISSION-W7</li>
          <li class="sub"><svg viewBox="0 0 12 10"><use href="#pc"/></svg>ADMISSION-W7</li>
          <li class="sub"><svg viewBox="0 0 12 10"><use href="#pc"/></svg>ADMISSION-W7</li>
          <li class="sub"><svg viewBox="0 0 12 10"><use href="#pc"/></svg>ADVANCMNT-W</li>
          <li class="sub"><svg viewBox="0 0 12 10"><use href="#pc"/></svg>AUDITORIUM-P</li>
        </ul>
        <div class="scrollbar" aria-hidden="true">
          <svg class="caret" viewBox="0 0 6 4"><path d="M0 4h6L3 0z" fill="#555"/></svg>
          <div class="thumb"><i></i></div>
          <svg class="caret end" viewBox="0 0 6 4"><path d="M0 0h6L3 4z" fill="#555"/></svg>
        </div>
        <div class="files">
          <h2><svg viewBox="0 0 5 5"><path d="M5 0v5H0z" fill="#333"/></svg>Hard Disk Drives (2)</h2>
          <div class="tiles">
            <button class="tile selected"><svg viewBox="0 0 26 20"><use href="#osdisk"/></svg><span class="info"><span>Acer (C:)</span><span class="meter"><i></i></span><small>130 GB free of 217 GB</small></span></button>
            <button class="tile"><svg viewBox="0 0 26 18"><use href="#disk"/></svg><span class="info"><span>DATA (D:)</span><span class="meter"></span><small>218 GB free of 218 GB</small></span></button>
          </div>
          <h2><svg viewBox="0 0 5 5"><path d="M5 0v5H0z" fill="#333"/></svg>Devices with Removable Storage (1)</h2>
          <div class="tiles">
            <button class="tile"><svg viewBox="0 0 26 26"><circle cx="17" cy="8.500" r="8" fill="#d8dadb" stroke="#8b8f92" stroke-width=".7"/><path d="M17 1q5 0 7 5l-7 3z" fill="#fff"/><path d="M17 8l-7-3q2-4 5-4z" fill="#aeb2b5"/><use href="#disk" x="0" y="10" width="24" height="16"/><path d="M10 9h14v6H10z" fill="#17191b"/><text x="11.500" y="14" font-size="5" font-weight="700" fill="#fff">DVD</text></svg><span>DVD RW Drive (E:)</span></button>
          </div>
        </div>
      </div>
      <footer class="details">
        <svg viewBox="0 0 26 20"><use href="#osdisk"/></svg>
        <dl>
          <dt class="name">Acer (C:)</dt><dd class="key">Space used:</dd><dd><span class="meter"><i></i></span></dd><dd class="key">Total size:</dd><dd>217 GB</dd>
          <dt>Local Disk</dt><dd class="key">Space free:</dd><dd>130 GB</dd><dd class="key">File system:</dd><dd>NTFS</dd>
        </dl>
      </footer>
    </div>
  </section>
</main>

<footer class="taskbar">
  <button class="start" aria-label="Start"><svg viewBox="0 0 22 22"><circle cx="11" cy="11" r="10" fill="url(#g-orb)" stroke="#173654" stroke-width=".8"/><path d="M5.500 7q3-2 5 0v4q-2-2-5 0z" fill="#f0682d"/><path d="M11.200 7.300q2.500 2 5 0v4q-2.500 2-5 0z" fill="#8dcc45"/><path d="M5.500 12q3-2 5 0v4q-2-2-5 0z" fill="#39a1e6"/><path d="M11.200 12.300q2.500 2 5 0v4q-2.500 2-5 0z" fill="#fbd13c"/></svg></button>
  <button class="task" aria-label="Internet Explorer"><svg viewBox="0 0 26 26"><path d="M7 15h16M21 19q-5 6-11 2-5-6 0-12 8-5 12 5" fill="none" stroke="#62cdf5" stroke-width="4"/><path d="M4 23Q0 20 9 10q11-10 16-6 1 2-1 5" fill="none" stroke="#f6d54b" stroke-width="2"/></svg></button>
  <button class="task open" aria-label="Windows Explorer"><svg viewBox="0 0 26 26"><path d="M1 3h8l1 2h15v17H1z" fill="#edcb6a"/><path d="M2 8h22v15H2z" fill="#fbeeb1"/><path d="M4 4h3m4 0h3m3 0h5" stroke="#3b9f48" stroke-width="2"/><path d="M5 15h16v9h-4v-4H9v4H5z" fill="#81c5ea"/></svg></button>
  <button class="task small" aria-label="Media Player"><svg viewBox="0 0 26 26"><path d="M1 4h16v19H1z" fill="#6da8d9"/><path d="M9 4h16v19H9z" fill="#b4dcf2"/><circle cx="13" cy="13" r="9" fill="#f07d1e"/><circle cx="13" cy="13" r="6.500" fill="#f7f2e9"/><path d="M11 9l6 4-6 4z" fill="#ef6b17"/></svg></button>
  <button class="task small" aria-label="Photoshop"><svg viewBox="0 0 26 26"><path d="M1 1h24v23H1z" fill="#12195e" stroke="#7fb4ee" stroke-width="2"/><text x="13" y="17" font-size="13" font-weight="700" fill="#a5d0ff" text-anchor="middle">Ps</text></svg></button>
  <button class="task small" aria-label="Illustrator"><svg viewBox="0 0 26 26"><path d="M1 1h24v23H1z" fill="#301805" stroke="#f29a25" stroke-width="2"/><text x="13" y="17" font-size="13" font-weight="700" fill="#ffad3b" text-anchor="middle">Ai</text></svg></button>
  <button class="task small" aria-label="Dreamweaver"><svg viewBox="0 0 26 26"><path d="M1 1h24v23H1z" fill="#16370d" stroke="#83e92c" stroke-width="2"/><text x="13" y="17" font-size="12" font-weight="700" fill="#8dff33" text-anchor="middle">Dw</text></svg></button>
  <button class="task open stacked" aria-label="Chrome"><svg viewBox="0 0 26 26"><use href="#chrome"/></svg></button>
  <button class="task" aria-label="Firefox Developer Edition"><svg viewBox="0 0 26 26"><use href="#foxdev"/></svg></button>
  <button class="task" aria-label="Gyazo"><svg viewBox="0 0 26 26"><use href="#gyazo"/></svg></button>
  <button class="task" aria-label="Gyazo GIF"><svg viewBox="0 0 26 26"><use href="#camera"/></svg></button>
  <button class="task" aria-label="Paint"><svg viewBox="0 0 26 26"><path d="M2 17l9-5 13 3-9 8-11-1z" fill="#e9edf0"/><circle cx="10" cy="8" r="5" fill="#d9a05b"/><path d="M4 15q7-6 13 2l-5 4-7-1z" fill="#2a72bd"/><path d="M24 1l2 3-11 13-5 3 3-5z" fill="#f2c640"/><path d="M24 1l2 3-5 6-3-2z" fill="#1e3045"/></svg></button>
  <div class="tray">
    <svg class="caret" viewBox="0 0 6 4"><path d="M0 4h6L3 0z" fill="#fff"/></svg>
    <svg class="flag" viewBox="0 0 10 10"><path d="M1 0v10M2 1q2-1 3 0t3 0v5q-2 1-3 0T2 6z" fill="#f7f7f7" stroke="#f7f7f7"/><path d="M5 5h5v5H5z" fill="#c51e29"/></svg>
    <time>9:06 AM</time>
    <span class="peek"></span>
  </div>
  <p class="watermark">MakeAGIF.com</p>
</footer>
</body>
</html>
```

FILE: styles.css
```css
* { box-sizing: border-box; }

body {
  margin: 0;
  height: 100vh;
  display: flex;
  flex-direction: column;
  position: relative;
  overflow: hidden;
  font-family: "Open Sans", "Noto Sans", sans-serif;
  font-size: 6px;
  line-height: 8px;
  color: #1c1c1c;
  background: linear-gradient(207deg, #5584ba 0%, #5382b8 40%, #4c7cb2 62%, #4b7bb1 100%);
}

button {
  padding: 0;
  border: 0;
  background: none;
  font: inherit;
  color: inherit;
}

svg { display: block; flex: none; }
.sprite { position: absolute; width: 0; height: 0; }
p, h2, ul, dl, dd { margin: 0; }

/* Desktop icons */
.desktop {
  flex: 1;
  min-height: 0;
  position: relative;
  display: grid;
  grid-template-columns: repeat(25, minmax(0, 1fr));
  grid-template-rows: repeat(10, minmax(0, 1fr));
  margin: 0 12px 0 -4px;
}

.wallmark { position: absolute; left: 304px; top: 308px; width: 70px; height: 60px; }

.item {
  display: flex;
  flex-direction: column;
  align-items: center;
  justify-content: flex-start;
  gap: 3px;
  padding-top: 3px;
  color: #fff;
  white-space: nowrap;
  text-align: center;
  text-shadow: 0 1px 1px #000, 0 0 2px #000, 1px 1px 2px rgba(0, 0, 0, .8);
}
.item > svg { width: 26px; height: 26px; }
.item text { text-shadow: none; }

.c1 { grid-column: 1; } .c2 { grid-column: 2; } .c3 { grid-column: 3; }
.c4 { grid-column: 4; } .c5 { grid-column: 5; } .c6 { grid-column: 6; }
.c7 { grid-column: 7; } .c10 { grid-column: 10; } .c11 { grid-column: 11; }
.c25 { grid-column: 25; }
.r1 { grid-row: 1; } .r2 { grid-row: 2; } .r3 { grid-row: 3; }
.r4 { grid-row: 4; } .r5 { grid-row: 5; } .r6 { grid-row: 6; }
.r7 { grid-row: 7; } .r8 { grid-row: 8; } .r9 { grid-row: 9; }
.r10 { grid-row: 10; }

.kodu-grey { color: #557078; }
.kodu-teal { color: #2aa9a5; }

.signature {
  position: absolute;
  right: -5px;
  bottom: 4px;
  color: #eef3f9;
  font: italic 900 14px/18px Lato, sans-serif;
  text-shadow: 0 0 1px #35587f;
}
.signature span { font-weight: 400; }

/* Explorer window */
.window {
  position: absolute;
  left: 318px;
  right: 57px;
  top: 138px;
  bottom: 58px;
  display: flex;
  flex-direction: column;
  padding: 0 3px 3px;
  border: 1px solid #18293f;
  border-radius: 5px 5px 4px 4px;
  background:
    linear-gradient(112deg, rgba(190, 208, 228, .6) 0, rgba(160, 185, 212, .35) 90px, rgba(30, 60, 100, .3) 125px, transparent 180px, transparent 450px, rgba(140, 170, 205, .35) 490px, rgba(60, 95, 140, .3) 540px, rgba(160, 185, 212, .4) 620px),
    #4e77a5;
  box-shadow: inset 0 0 0 1px #9bb9d8, 0 1px 5px 2px rgba(10, 28, 55, .75);
}

.titlebar { display: flex; justify-content: flex-end; height: 17px; }
.caption { display: flex; height: 10px; }
.caption button {
  width: 15px;
  display: grid;
  place-items: center;
  border: 1px solid #455a75;
  border-top: 0;
  border-left-color: #b9c9db;
  background: linear-gradient(#b9c6d6 45%, #7b91ac 50%, #9eb0c5);
}
.caption button:first-child { border-radius: 0 0 0 3px; }
.caption .close {
  width: 25px;
  border-radius: 0 0 3px 0;
  background: linear-gradient(#df9489 45%, #c0291c 50%, #d9574a);
}
.caption svg { width: 12px; height: 10px; }

.addressbar { display: flex; align-items: center; height: 15px; padding: 0 1px; }
.round { width: 15px; }
.round svg { width: 14px; height: 14px; }
.history { width: 9px; display: grid; place-items: center; }
.history svg { width: 5px; height: 4px; }
.address, .search {
  display: flex;
  align-items: center;
  height: 13px;
  border: 1px solid #7890ad;
  border-top-color: #4d6482;
  background: #ccd8e6;
}
.address { flex: 1; gap: 4px; padding-left: 1px; }
.tri { width: 3px; height: 5px; }
.s9 { width: 9px; height: 9px; }
.drop { width: 5px; height: 3px; margin-left: auto; }
.refresh { height: 11px; width: 13px; display: grid; place-items: center; border-left: 1px solid #7890ad; }
.refresh svg { width: 9px; height: 9px; }
.search { flex: 0 0 130px; margin-left: 3px; padding: 0 2px 0 4px; }
.search input {
  flex: 1;
  min-width: 0;
  padding: 0;
  border: 0;
  outline: 0;
  background: none;
  font: italic 6px/8px "Open Sans", "Noto Sans", sans-serif;
}
.search input::placeholder { color: #66717e; opacity: 1; }

.body {
  flex: 1;
  min-height: 0;
  display: flex;
  flex-direction: column;
  margin-top: 2px;
  border: 1px solid #44668c;
  background: #fcfcfd;
}

.toolbar {
  display: flex;
  align-items: center;
  gap: 16px;
  height: 19px;
  padding: 0 7px 0 9px;
  color: #213e66;
  background: linear-gradient(#f7fbfe 0, #e4eef8 50%, #d8e5f3 55%, #dce8f5);
  border-bottom: 1px solid #bccbdd;
}
.toolbar button { display: flex; align-items: center; gap: 4px; white-space: nowrap; }
.toolbar > button:first-child { gap: 2px; }
.tools { display: flex; gap: 11px; margin-left: auto; }
.caret { width: 5px; height: 3px; }

.panes { flex: 1; min-height: 0; display: flex; }

.tree {
  width: 73px;
  padding: 3px 0 0;
  display: flex;
  flex-direction: column;
  list-style: none;
  overflow: hidden;
}
.tree li {
  flex: 1 1 0;
  min-height: 0;
  display: flex;
  align-items: center;
  gap: 3px;
  padding-left: 9px;
  white-space: nowrap;
}
.tree .sub { padding-left: 15px; }
.tree svg { width: 9px; height: 9px; }
.tree .current { background: linear-gradient(#f3f3f4, #e4e4e6); }

.scrollbar {
  width: 9px;
  display: flex;
  flex-direction: column;
  align-items: center;
  gap: 3px;
  padding: 3px 1px;
  background: #f0f0f1;
}
.thumb {
  width: 8px;
  height: 68px;
  display: grid;
  place-items: center;
  border: 1px solid #b4b6ba;
  border-radius: 1px;
  background: linear-gradient(90deg, #f4f4f5, #d5d6d9);
}
.thumb i { width: 4px; height: 5px; background: repeating-linear-gradient(#888 0 1px, #eee 1px 2px); }
.end { margin-top: auto; }

.files { flex: 1; min-width: 0; padding: 2px 5px 0 5px; }
.files h2 {
  display: flex;
  align-items: center;
  gap: 4px;
  height: 12px;
  font-size: 8px;
  font-weight: 400;
  color: #2a3f91;
}
.files h2 svg { width: 4px; height: 4px; }
.files h2::after { content: ""; flex: 1; height: 1px; background: #e2e6ee; }
.tiles { display: flex; gap: 2px; padding: 2px 0 3px 3px; }
.tile {
  width: 134px;
  height: 28px;
  display: flex;
  align-items: center;
  gap: 2px;
  padding: 1px;
  border: 1px solid transparent;
  border-radius: 2px;
  text-align: left;
}
.tile > svg { width: 26px; height: 26px; }
.tile.selected { border-color: #8bb4e0; background: linear-gradient(#dfecfc, #bfd8f5); }
.info { flex: 1; display: flex; flex-direction: column; }
.info small { font-size: 6px; color: #707780; }
.meter { display: block; height: 8px; border: 1px solid #a5a9ad; border-radius: 1px; background: #fbfbfc; }
.meter i { display: block; width: 40%; height: 100%; background: linear-gradient(#6bd3e4, #159bb8 50%, #1593b3); }

.details {
  display: flex;
  align-items: center;
  gap: 6px;
  height: 28px;
  padding: 0 9px;
  background: #eff4fb;
  border-top: 1px solid #cfdae8;
}
.details > svg { width: 25px; height: 20px; }
.details dl {
  display: grid;
  grid-template-columns: auto auto 71px auto auto;
  align-items: center;
  gap: 2px;
  white-space: nowrap;
}
.details dt { color: #596e87; margin-right: 2px; }
.details .name { color: #17202c; }
.details .key { color: #596e87; text-align: right; }
.details .meter { height: 7px; }

/* Taskbar */
.taskbar {
  position: relative;
  height: 21px;
  display: flex;
  align-items: center;
  border-top: 1px solid #6d8db1;
  background: linear-gradient(90deg, #31567f 0, #4470a0 5%, #456f9f 84%, #34587f 92%, #365a83);
}
.start { width: 28px; }
.start svg { width: 21px; height: 20px; }
.task { width: 33px; height: 20px; display: grid; place-items: center; padding: 0 1px; }
.task svg { width: 17px; height: 17px; }
.task.small svg { width: 15px; height: 15px; }
.task.open {
  border: 1px solid #a9bcd1;
  border-radius: 2px;
  background: linear-gradient(#9db4cc, #b9cadb);
}
.task.stacked { background: linear-gradient(#7795b6, #8ba7c4); border-right: 2px solid #879fbb; }
.tray { flex: 1; display: flex; align-items: flex-start; justify-content: flex-end; height: 20px; color: #fff; }
.tray > .caret { margin: 8px 5px 0 0; }
.tray time { line-height: 6px; }
.flag { width: 9px; height: 9px; margin-top: 6px; margin-right: 39px; }
.peek { width: 8px; height: 20px; margin-left: 7px; border: 1px solid #7e98b6; background: #587ca4; }
.watermark {
  position: absolute;
  right: 0;
  bottom: 0;
  padding: 0 5px 0 4px;
  color: #fff;
  background: #080808;
  font-size: 10px;
  line-height: 14px;
}
```
